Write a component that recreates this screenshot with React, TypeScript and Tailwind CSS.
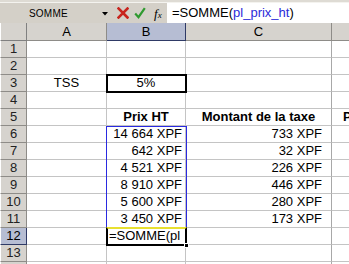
import React from "react";

type Row = {
  a?: string;
  b?: string;
  c?: string;
  d?: string;
  head?: boolean;
};

const rows: Record<number, Row> = {
  3: { a: "TSS", b: "5%" },
  5: { b: "Prix HT", c: "Montant de la taxe", d: "Prix TTC", head: true },
  6: { b: "14 664 XPF", c: "733 XPF" },
  7: { b: "642 XPF", c: "32 XPF" },
  8: { b: "4 521 XPF", c: "226 XPF" },
  9: { b: "8 910 XPF", c: "446 XPF" },
  10: { b: "5 600 XPF", c: "280 XPF" },
  11: { b: "3 450 XPF", c: "173 XPF" },
  12: { b: "=SOMME(pl" },
};

const cell =
  "h-[17px] border-r border-b border-[#c4c4c4] text-[13px] leading-[16px] whitespace-nowrap overflow-hidden text-black";

export default function App() {
  const nums = Array.from({ length: 14 }, (_, i) => i + 1);

  return (
    <div
      className="w-[349px] h-[264px] overflow-hidden bg-white"
      style={{ fontFamily: '"Liberation Sans", Arial, sans-serif' }}
    >
      {/* barre de formule */}
      <div className="h-[3px] bg-[#dedbd4] border-b border-[#f4f3ef]" />
      <div className="h-[20px] flex bg-[#d4d0c8]">
        <div className="w-[110px] flex items-center">
          <span className="ml-[29px] text-[10px] text-black tracking-[0.2px]">SOMME</span>
          <svg className="ml-[34px] mt-[1px]" width="6" height="4" viewBox="0 0 6 4">
            <path d="M0 0 H6 L3 3.5 Z" fill="#000" />
          </svg>
        </div>
        <div className="w-[57px] flex items-center">
          <svg className="ml-[7px]" width="12" height="12" viewBox="0 0 12 12">
            <path d="M1.5 1.5 L10.5 10.5 M10.5 1.5 L1.5 10.5" stroke="#c8251e" strokeWidth="2.6" strokeLinecap="square" />
          </svg>
          <svg className="ml-[5px]" width="12" height="12" viewBox="0 0 12 12">
            <path d="M1.2 6.5 L4.5 10.2 L10.8 1.2" stroke="#2f9a2f" strokeWidth="2.2" fill="none" />
          </svg>
          <span
            className="ml-[8px] text-[13px] italic text-black leading-none"
            style={{ fontFamily: '"Liberation Serif", "Times New Roman", serif' }}
          >
            f<span className="text-[9px]">x</span>
          </span>
        </div>
        <div className="flex-1 bg-white flex items-center pl-[5px] text-[13px] text-black">
          =SOMME(<span className="text-[#2b2bd9]">pl_prix_ht</span>)
        </div>
      </div>

      {/* feuille */}
      <div className="relative">
        <div className="grid grid-cols-[27px_80px_79px_146px_1fr]">
          {/* en-têtes de colonnes */}
          <div className="h-[18px] bg-[#d6d3ce] border-r border-b border-[#808080] border-l border-l-white" />
          <div className="h-[18px] bg-[#d6d3ce] border-r border-b border-[#8e8c88] text-center text-[13px] leading-[17px]">A</div>
          <div className="h-[18px] bg-[#b6bdd3] border-r border-b border-[#2f3a66] text-center text-[13px] leading-[17px]">B</div>
          <div className="h-[18px] bg-[#d6d3ce] border-r border-b border-[#8e8c88] text-center text-[13px] leading-[17px]">C</div>
          <div className="h-[18px] bg-[#d6d3ce] border-b border-[#8e8c88]" />

          {nums.map((n) => {
            const r = rows[n] || {};
            const sel = n === 12;
            const right = n >= 6 && n <= 11;
            return (
              <React.Fragment key={n}>
                <div
                  className={`h-[17px] border-r border-b text-center text-[13px] leading-[16px] border-l border-l-white ${
                    sel ? "bg-[#b6bdd3] border-[#2f3a66] text-black" : "bg-[#d6d3ce] border-[#8e8c88] text-[#222]"
                  }`}
                >
                  {n}
                </div>
                <div className={`${cell} text-center`}>{r.a}</div>
                <div
                  className={`${cell} ${right ? "text-right pr-[3px]" : sel ? "text-left pl-[2px]" : "text-center"} ${
                    r.head ? "font-bold" : ""
                  }`}
                >
                  {r.b}
                </div>
                <div className={`${cell} border-r-[#a8a8a8] ${right ? "text-right pr-[9px]" : "text-center"} ${r.head ? "font-bold" : ""}`}>
                  {r.c}
                </div>
                <div className={`${cell} border-r-0 pl-[11px] ${r.head ? "font-bold" : ""}`}>{r.d}</div>
              </React.Fragment>
            );
          })}
        </div>

        {/* cellule B3 encadrée */}
        <div className="absolute left-[106px] top-[51px] w-[81px] h-[19px] border-2 border-black pointer-events-none" />
        {/* plage pl_prix_ht */}
        <div className="absolute left-[106px] top-[103px] w-[81px] h-[103px] border border-[#2a2ae0] pointer-events-none" />
        {/* cellule active B12 */}
        <div className="absolute left-[106px] top-[204px] w-[81px] h-[19px] border-2 border-black border-t-[#e8e030] pointer-events-none" />
        <div className="absolute left-[184px] top-[220px] w-[5px] h-[5px] bg-black border border-white pointer-events-none" />
      </div>
    </div>
  );
}
